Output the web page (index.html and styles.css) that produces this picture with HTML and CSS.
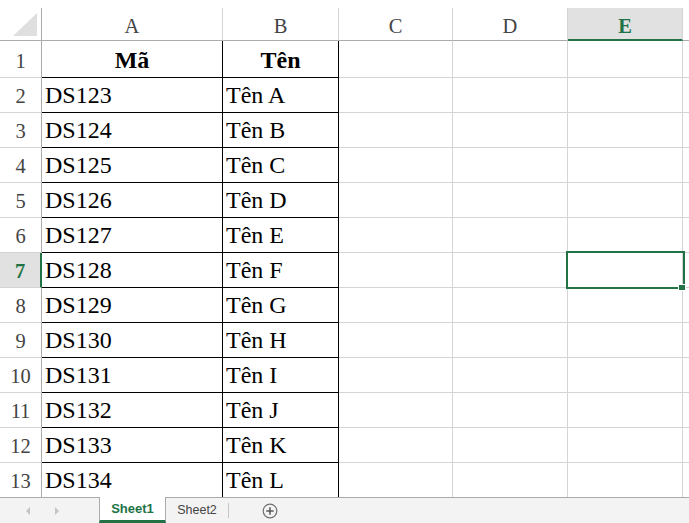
FILE: index.html
```html
<!DOCTYPE html>
<html lang="vi">
<head>
<meta charset="utf-8">
<title>Sheet1</title>
<link rel="stylesheet" href="styles.css">
</head>
<body>
<div class="app">
  <div class="sheet">
    <div class="grid">
      <div class="cell corner"><svg width="41" height="32" viewBox="0 0 41 32"><polygon points="37,5 37,28 13,28" fill="#dfdfdf"/></svg></div>
      <div class="cell colhead">A</div>
      <div class="cell colhead">B</div>
      <div class="cell colhead">C</div>
      <div class="cell colhead">D</div>
      <div class="cell colhead selhead">E</div>
      <div class="cell colhead"></div>

      <div class="cell rowhead">1</div>
      <div class="cell data title">Mã</div>
      <div class="cell data title">Tên</div>
      <div class="cell"></div><div class="cell"></div><div class="cell"></div><div class="cell"></div>

      <div class="cell rowhead">2</div>
      <div class="cell data">DS123</div><div class="cell data">Tên A</div>
      <div class="cell"></div><div class="cell"></div><div class="cell"></div><div class="cell"></div>

      <div class="cell rowhead">3</div>
      <div class="cell data">DS124</div><div class="cell data">Tên B</div>
      <div class="cell"></div><div class="cell"></div><div class="cell"></div><div class="cell"></div>

      <div class="cell rowhead">4</div>
      <div class="cell data">DS125</div><div class="cell data">Tên C</div>
      <div class="cell"></div><div class="cell"></div><div class="cell"></div><div class="cell"></div>

      <div class="cell rowhead">5</div>
      <div class="cell data">DS126</div><div class="cell data">Tên D</div>
      <div class="cell"></div><div class="cell"></div><div class="cell"></div><div class="cell"></div>

      <div class="cell rowhead">6</div>
      <div class="cell data">DS127</div><div class="cell data">Tên E</div>
      <div class="cell"></div><div class="cell"></div><div class="cell"></div><div class="cell"></div>

      <div class="cell rowhead selrow">7</div>
      <div class="cell data">DS128</div><div class="cell data">Tên F</div>
      <div class="cell"></div><div class="cell"></div><div class="cell"></div><div class="cell"></div>

      <div class="cell rowhead">8</div>
      <div class="cell data">DS129</div><div class="cell data">Tên G</div>
      <div class="cell"></div><div class="cell"></div><div class="cell"></div><div class="cell"></div>

      <div class="cell rowhead">9</div>
      <div class="cell data">DS130</div><div class="cell data">Tên H</div>
      <div class="cell"></div><div class="cell"></div><div class="cell"></div><div class="cell"></div>

      <div class="cell rowhead">10</div>
      <div class="cell data">DS131</div><div class="cell data">Tên I</div>
      <div class="cell"></div><div class="cell"></div><div class="cell"></div><div class="cell"></div>

      <div class="cell rowhead">11</div>
      <div class="cell data">DS132</div><div class="cell data">Tên J</div>
      <div class="cell"></div><div class="cell"></div><div class="cell"></div><div class="cell"></div>

      <div class="cell rowhead">12</div>
      <div class="cell data">DS133</div><div class="cell data">Tên K</div>
      <div class="cell"></div><div class="cell"></div><div class="cell"></div><div class="cell"></div>

      <div class="cell rowhead">13</div>
      <div class="cell data">DS134</div><div class="cell data">Tên L</div>
      <div class="cell"></div><div class="cell"></div><div class="cell"></div><div class="cell"></div>
    </div>
    <div class="sel"><div class="handle"></div></div>
  </div>
  <div class="tabs">
    <div class="nav"><span class="arrow-left"></span><span class="arrow-right"></span></div>
    <div class="tab active">Sheet1</div>
    <div class="tab">Sheet2</div>
    <div class="sep"></div>
    <div class="add"><svg width="16" height="16" viewBox="0 0 16 16"><circle cx="8" cy="8" r="6.8" fill="none" stroke="#6f6f6f" stroke-width="1.2"/><path d="M8 4.3V11.7M4.3 8H11.7" stroke="#5a5a5a" stroke-width="1.5"/></svg></div>
  </div>
</div>
</body>
</html>
```
FILE: styles.css
```css
body {
  margin: 0;
  width: 689px;
  height: 523px;
  overflow: hidden;
  background: #ffffff;
  font-family: "Liberation Serif", "Times New Roman", serif;
}

.app {
  display: flex;
  flex-direction: column;
  height: 523px;
}

.sheet {
  position: relative;
  height: 497px;
  overflow: hidden;
  padding-top: 8px;
  box-sizing: border-box;
}

.grid {
  display: grid;
  grid-template-columns: 42px 181px 116px 114px 115px 115px 1fr;
  grid-template-rows: 33px 37px;
  grid-auto-rows: 35px;
}

.cell {
  box-sizing: border-box;
  border-right: 1px solid #d4d4d4;
  border-bottom: 1px solid #d4d4d4;
  display: flex;
  align-items: flex-end;
  padding: 0 3px 4px;
  font-size: 24px;
  line-height: 26px;
  white-space: nowrap;
  overflow: hidden;
  color: #000;
}

.corner {
  padding: 0;
  align-items: stretch;
  border-right-color: #ababab;
  border-bottom-color: #ababab;
}

.colhead {
  justify-content: center;
  font-size: 20.5px;
  line-height: 20px;
  padding: 0 0 4px;
  color: #444;
  border-bottom-color: #ababab;
}

.selhead {
  background: #e1e1e1;
  color: #217346;
  font-weight: bold;
  border-bottom: 2px solid #217346;
  padding-bottom: 3px;
}

.rowhead {
  justify-content: center;
  font-size: 20.5px;
  line-height: 20px;
  padding: 0 0 6px;
  color: #444;
  border-right-color: #ababab;
}

.selrow {
  background: #e1e1e1;
  color: #217346;
  font-weight: bold;
  border-right: 2px solid #217346;
}

.data {
  border-right-color: #000;
  border-bottom-color: #000;
}

.title {
  justify-content: center;
  font-weight: bold;
}

.sel {
  position: absolute;
  left: 566px;
  top: 251px;
  width: 119px;
  height: 38px;
  box-sizing: border-box;
  border: 2px solid #217346;
}

.handle {
  position: absolute;
  left: 110px;
  top: 31px;
  width: 8px;
  height: 7px;
  box-sizing: border-box;
  background: #217346;
  border: 1px solid #ffffff;
}

.tabs {
  height: 26px;
  box-sizing: border-box;
  border-top: 1px solid #ababab;
  background: #f3f3f3;
  display: flex;
  align-items: stretch;
  font-family: "Liberation Sans", Arial, sans-serif;
  font-size: 12.5px;
  color: #444;
}

.nav {
  width: 99px;
  display: flex;
  align-items: center;
  padding-left: 26px;
  gap: 25px;
  box-sizing: border-box;
}

.arrow-left {
  width: 0;
  height: 0;
  border-top: 4px solid transparent;
  border-bottom: 4px solid transparent;
  border-right: 4px solid #c4c4c4;
}

.arrow-right {
  width: 0;
  height: 0;
  border-top: 4px solid transparent;
  border-bottom: 4px solid transparent;
  border-left: 4px solid #c4c4c4;
}

.tab {
  width: 62px;
  display: flex;
  align-items: center;
  justify-content: center;
  padding-bottom: 1px;
  box-sizing: border-box;
}

.tab.active {
  width: 67px;
  margin-top: -1px;
  background: #ffffff;
  border-left: 1px solid #ababab;
  border-right: 1px solid #ababab;
  border-bottom: 3px solid #217346;
  color: #217346;
  font-weight: bold;
  font-size: 13px;
  padding-bottom: 0;
}

.sep {
  width: 1px;
  height: 15px;
  align-self: center;
  background: #c6c6c6;
}

.add {
  display: flex;
  align-items: center;
  margin-left: 33px;
}

.add svg {
  display: block;
}
```
